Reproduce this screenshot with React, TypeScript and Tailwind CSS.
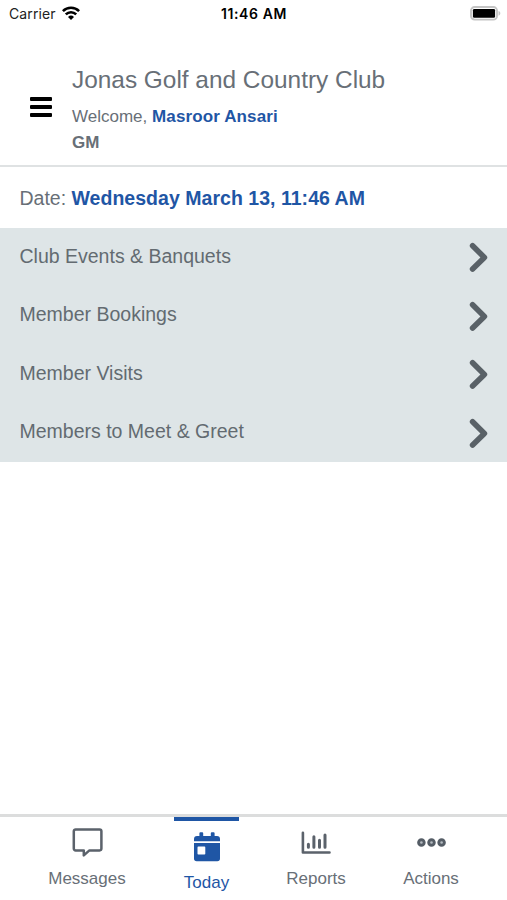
import { useState } from "react";

const MessagesIcon = () => (
  <svg width="31" height="30" viewBox="0 0 31 30" fill="none" stroke="#5b626b" strokeWidth="2.5">
    <path
      d="M3.600 1.400h24a1.800 1.800 0 0 1 1.800 1.800v17.400a1.800 1.800 0 0 1-1.800 1.800H17.400l-5.600 5v-5H3.600a1.800 1.800 0 0 1-1.800-1.800V3.200a1.800 1.800 0 0 1 1.800-1.800z"
      strokeLinejoin="round"
    />
  </svg>
);

const TodayIcon = () => (
  <svg width="26" height="30" viewBox="0 0 26 30" fill="#1f56a5">
    <path d="M0 9.200V7a3 3 0 0 1 3-3h2.400V1.200a1 1 0 0 1 1-1h1.800a1 1 0 0 1 1 1V4h7.600V1.200a1 1 0 0 1 1-1h1.800a1 1 0 0 1 1 1V4H23a3 3 0 0 1 3 3v2.200z" />
    <path
      fillRule="evenodd"
      d="M0 11h26v15.500a2.700 2.700 0 0 1-2.700 2.700H2.700A2.700 2.700 0 0 1 0 26.500zM4.300 14.600a.8.8 0 0 0-.8.8v6.400a.8.8 0 0 0 .8.8h6.200a.8.8 0 0 0 .8-.8v-6.400a.8.8 0 0 0-.8-.8z"
    />
  </svg>
);

const ReportsIcon = () => (
  <svg width="30" height="24" viewBox="0 0 30 24" fill="none" stroke="#5b626b" strokeLinecap="round">
    <path d="M1.900 1.700v19.800h26.600" strokeWidth="2.600" strokeLinejoin="round" />
    <path d="M7.400 13.300v3M12.900 5.800v10.500M18.500 9.300v7M24 4.100v12.200" strokeWidth="3" />
  </svg>
);

const ActionsIcon = () => (
  <svg width="29" height="9" viewBox="0 0 29 9" fill="#b4bac0" stroke="#555d66" strokeWidth="2.900">
    <circle cx="4.400" cy="4.500" r="2.800" />
    <circle cx="14.500" cy="4.500" r="2.800" />
    <circle cx="24.600" cy="4.500" r="2.800" />
  </svg>
);

const WifiIcon = () => (
  <svg width="18" height="14" viewBox="0 0 18 14" fill="none" stroke="#000" strokeWidth="2.600">
    <path d="M.9 5.100a11.500 11.500 0 0 1 16.200 0" />
    <path d="M3.800 8.400a7.400 7.400 0 0 1 10.400 0" />
    <path d="M9 14 6 11a4.300 4.300 0 0 1 6 0z" fill="#000" stroke="none" />
  </svg>
);

const BatteryIcon = () => (
  <svg width="31" height="15" viewBox="0 0 31 15">
    <rect x="1" y="1" width="26" height="12.600" rx="3.600" fill="#fff" stroke="#c4c4c4" strokeWidth="1.900" />
    <rect x="2.900" y="2.900" width="22.200" height="8.900" rx="1.400" fill="#000" />
    <path d="M28.500 5c2.400.7 2.400 4 0 4.700z" fill="#c4c4c4" />
  </svg>
);

const sections = [
  "Club Events & Banquets",
  "Member Bookings",
  "Member Visits",
  "Members to Meet & Greet",
];

const tabs = [
  { label: "Messages", icon: <MessagesIcon />, width: "w-[174px]", iconPad: "pt-[11px]" },
  { label: "Today", icon: <TodayIcon />, width: "w-[65px]", iconPad: "pt-[11px]" },
  { label: "Reports", icon: <ReportsIcon />, width: "w-[154px]", iconPad: "pt-[14px]" },
  { label: "Actions", icon: <ActionsIcon />, width: "w-[76px]", iconPad: "pt-[21px]" },
];

export default function App() {
  const [activeTab, setActiveTab] = useState("Today");

  return (
    <div className="flex h-[900px] w-full flex-col bg-white font-['Liberation_Sans',sans-serif] text-[#686f77]">
      <div className="grid h-[26px] grid-cols-3 items-center pr-[6px] pl-[9px] font-['Inter',sans-serif] text-[14px] text-black">
        <div className="flex items-center gap-[6px]">
          <span className="pt-px tracking-[0.1px] text-[#222]">Carrier</span>
          <WifiIcon />
        </div>
        <span className="pt-px pr-[2px] text-center font-semibold tracking-[0.6px] whitespace-nowrap">11:46 AM</span>
        <div className="flex justify-end">
          <BatteryIcon />
        </div>
      </div>

      <header className="flex h-[141px] border-b-2 border-[#dfe2e3] pl-[30px]">
        <button type="button" aria-label="Menu" className="mt-[71px] flex h-5 w-[22px] flex-col justify-between">
          <span className="h-1 w-full rounded-[1px] bg-black" />
          <span className="h-1 w-full rounded-[1px] bg-black" />
          <span className="h-1 w-full rounded-[1px] bg-black" />
        </button>
        <div className="ml-[20px] pt-[39px] whitespace-nowrap">
          <h1 className="text-[24.400px] leading-[30px]">Jonas Golf and Country Club</h1>
          <p className="mt-[9px] text-[17px] leading-[26px]">
            Welcome, <span className="font-bold tracking-[0.130px] text-[#1f56a5]">Masroor Ansari</span>
          </p>
          <p className="text-[17px] leading-[25px] font-bold">GM</p>
        </div>
      </header>

      <div className="flex h-[61px] items-center pt-[2px] pl-[19.500px] text-[19.500px] whitespace-pre">
        Date: <span className="font-bold tracking-[0.030px] text-[#1f56a5]">Wednesday March 13, 11:46 AM</span>
      </div>

      <main className="flex-1">
        <ul className="bg-[#dee5e7]">
          {sections.map(section => (
            <li key={section} className="flex h-[58.600px] items-center justify-between pr-[18px] pl-[19.500px]">
              <span className="pb-[2px] text-[19.500px] text-[#636b71]">{section}</span>
              <svg width="20" height="30" viewBox="0 0 20 30" fill="none" stroke="#596167" strokeWidth="5.600">
                <path d="M3.600 3.800 15.400 15.400 3.600 27" strokeLinecap="round" strokeLinejoin="round" />
              </svg>
            </li>
          ))}
        </ul>
      </main>

      <nav className="flex h-[86px] border-t-[3px] border-[#dcdddd] text-[17px]">
        {tabs.map(({ label, icon, width, iconPad }) => (
          <button
            key={label}
            type="button"
            onClick={() => setActiveTab(label)}
            className={`flex flex-col items-center ${width} ${
              activeTab === label ? "border-t-4 border-[#1f56a5] text-[#1f56a5]" : ""
            }`}
          >
            <span className={`flex h-[52px] items-start ${iconPad}`}>{icon}</span>
            <span className="leading-5">{label}</span>
          </button>
        ))}
      </nav>
    </div>
  );
}
